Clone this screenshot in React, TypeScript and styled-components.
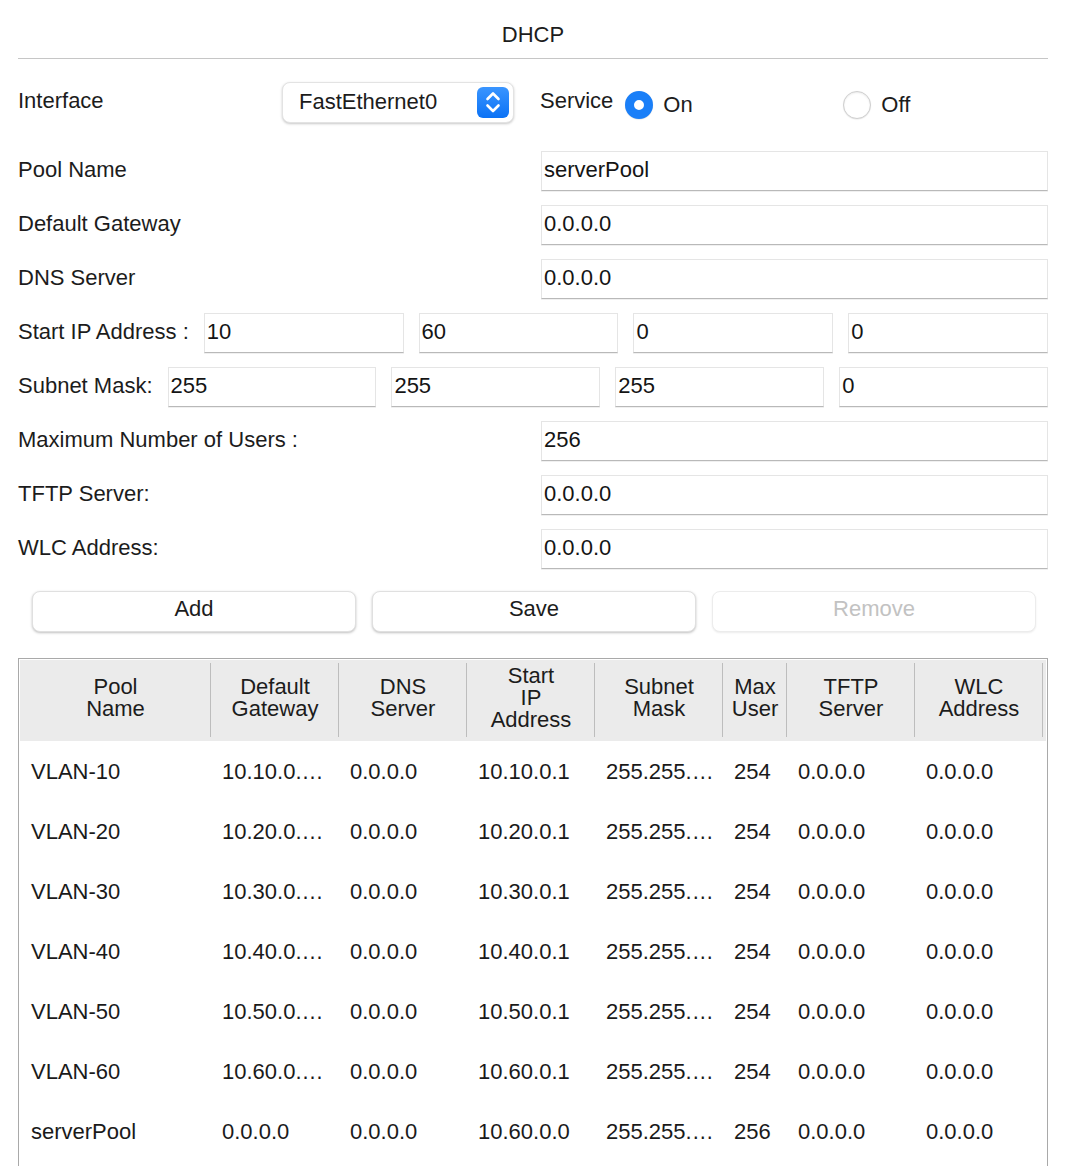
import React from 'react';
import styled, { createGlobalStyle } from 'styled-components';

const GlobalStyle = createGlobalStyle`
  html, body { margin: 0; padding: 0; background: #ffffff; }
  body {
    font-family: "Liberation Sans", Arial, Helvetica, sans-serif;
    color: #1c1c1c;
    overflow: hidden;
  }
  * { box-sizing: border-box; }
`;

const Page = styled.div`
  width: 1030px;
  margin-left: 18px;
`;

const Title = styled.h1`
  margin: 0;
  padding-top: 24px;
  font-size: 22px;
  line-height: 22px;
  font-weight: 400;
  text-align: center;
  color: #1c1c1c;
`;

const Divider = styled.hr`
  margin: 12px 0 0;
  border: 0;
  border-top: 1px solid #c6c6c6;
  height: 0;
`;

const InterfaceRow = styled.div`
  display: grid;
  grid-template-columns: 522px 1fr;
  align-items: center;
  height: 41px;
  margin-top: 23px;
`;

const Cell = styled.div`
  display: flex;
  align-items: center;
  height: 100%;
`;

const Label = styled.span`
  font-size: 22px;
  line-height: 24px;
  padding-bottom: 3px;
  white-space: nowrap;
  color: #1c1c1c;
`;

const GrowLabel = styled(Label)`
  flex: 1;
`;

const SelectBox = styled.div`
  width: 232px;
  height: 41px;
  margin-right: 26px;
  display: flex;
  align-items: center;
  justify-content: space-between;
  padding: 0 4px 2px 16px;
  background: #fff;
  border: 1px solid #e3e3e3;
  border-radius: 8px;
  box-shadow: 0 1px 2.5px rgba(0, 0, 0, 0.22);
  font-size: 22px;
  color: #1c1c1c;
`;

const Stepper = styled.span`
  width: 32px;
  height: 31px;
  margin-top: 2px;
  border-radius: 6px;
  background: linear-gradient(#3a95ff, #0b72f5);
  display: flex;
  align-items: center;
  justify-content: center;
`;

const ServiceLabel = styled(Label)`
  margin-right: 12px;
`;

const RadioOption = styled.label`
  display: flex;
  align-items: center;
  gap: 10px;
  width: 218px;
  font-size: 22px;
  padding-top: 5px;
`;

const RadioDot = styled.span<{ $on?: boolean }>`
  width: 28px;
  height: 28px;
  border-radius: 50%;
  flex: none;
  background: #fff;
  border: ${(p) => (p.$on ? '9px solid #1a7ff8' : '1px solid #cfcfcf')};
  box-shadow: ${(p) =>
    p.$on ? '0 0.5px 1px rgba(0,0,0,0.15)' : 'inset 0 1px 2px rgba(0,0,0,0.08), 0 0.5px 1px rgba(0,0,0,0.1)'};
`;

const FormRow = styled.div<{ $first?: boolean }>`
  display: grid;
  grid-template-columns: 523px 1fr;
  align-items: center;
  height: 40px;
  margin-top: ${(p) => (p.$first ? '28px' : '14px')};
`;

const SplitRow = styled.div`
  display: flex;
  align-items: center;
  gap: 15px;
  height: 40px;
  margin-top: 14px;
`;

const Field = styled.input`
  width: 100%;
  min-width: 0;
  height: 40px;
  padding: 0 2px 3px;
  font: inherit;
  font-size: 22px;
  color: #141414;
  background: #fff;
  border: 1px solid #e5e5e5;
  border-bottom: 1px solid #b9b9b9;
  box-shadow: 0 1px 0 rgba(0, 0, 0, 0.06);
  outline: none;
`;

const OctetField = styled(Field)`
  flex: 1;
`;

const ButtonRow = styled.div`
  display: flex;
  gap: 16px;
  padding: 0 12px 0 14px;
  margin-top: 22px;
`;

const ActionButton = styled.button<{ $disabled?: boolean }>`
  flex: 1;
  height: 41px;
  font: inherit;
  font-size: 22px;
  color: ${(p) => (p.$disabled ? '#c2c2c2' : '#1c1c1c')};
  background: #fff;
  border: 1px solid ${(p) => (p.$disabled ? '#ececec' : '#e0e0e0')};
  border-radius: 8px;
  box-shadow: ${(p) => (p.$disabled ? '0 1px 2px rgba(0,0,0,0.08)' : '0 1px 2.5px rgba(0,0,0,0.25)')};
  padding: 0;
  padding-bottom: 6px;
`;

const TableFrame = styled.div`
  margin-top: 26px;
  height: 530px;
  border: 1px solid #a9a9a9;
  padding: 1px;
`;

const PoolTable = styled.table`
  width: 100%;
  border-collapse: separate;
  border-spacing: 0;
  table-layout: fixed;
`;

const HeadCell = styled.th<{ $sep?: boolean }>`
  position: relative;
  height: 81px;
  padding: 0 2px 5px;
  background: #ebebeb;
  font-size: 22px;
  line-height: 22px;
  font-weight: 400;
  text-align: center;
  vertical-align: middle;
  color: #1c1c1c;

  &::after {
    content: '';
    display: ${(p) => (p.$sep ? 'block' : 'none')};
    position: absolute;
    right: 0;
    top: 3px;
    bottom: 4px;
    width: 1.5px;
    background: #bdbdbd;
  }
`;

const BodyCell = styled.td`
  height: 60px;
  padding: 2px 8px 0 11px;
  font-size: 22px;
  white-space: nowrap;
  overflow: hidden;
  text-overflow: ellipsis;
  vertical-align: middle;
  color: #1a1a1a;
`;

const Chevrons = () => (
  <svg width="32" height="31" viewBox="0 0 32 31" fill="none">
    <path d="M10.5 12 L16 6.5 L21.5 12" stroke="#fff" strokeWidth="2.6" strokeLinecap="round" strokeLinejoin="round" />
    <path d="M10.5 18.5 L16 24 L21.5 18.5" stroke="#fff" strokeWidth="2.6" strokeLinecap="round" strokeLinejoin="round" />
  </svg>
);

const fields: { label: string; value: string }[] = [
  { label: 'Pool Name', value: 'serverPool' },
  { label: 'Default Gateway', value: '0.0.0.0' },
  { label: 'DNS Server', value: '0.0.0.0' },
];

const tailFields: { label: string; value: string }[] = [
  { label: 'Maximum Number of Users :', value: '256' },
  { label: 'TFTP Server:', value: '0.0.0.0' },
  { label: 'WLC Address:', value: '0.0.0.0' },
];

const columns: { width: number; title: string[] }[] = [
  { width: 191, title: ['Pool', 'Name'] },
  { width: 128, title: ['Default', 'Gateway'] },
  { width: 128, title: ['DNS', 'Server'] },
  { width: 128, title: ['Start', 'IP', 'Address'] },
  { width: 128, title: ['Subnet', 'Mask'] },
  { width: 64, title: ['Max', 'User'] },
  { width: 128, title: ['TFTP', 'Server'] },
  { width: 128, title: ['WLC', 'Address'] },
];

type Pool = [string, string, string, string, string, string, string, string];

const pools: Pool[] = [
  ...[10, 20, 30, 40, 50, 60].map(
    (n): Pool => [
      `VLAN-${n}`,
      `10.${n}.0.254`,
      '0.0.0.0',
      `10.${n}.0.1`,
      '255.255.255.0',
      '254',
      '0.0.0.0',
      '0.0.0.0',
    ]
  ),
  ['serverPool', '0.0.0.0', '0.0.0.0', '10.60.0.0', '255.255.255.0', '256', '0.0.0.0', '0.0.0.0'],
];

export default function App() {
  return (
    <>
      <GlobalStyle />
      <Page>
        <Title>DHCP</Title>
        <Divider />

        <InterfaceRow>
          <Cell>
            <GrowLabel>Interface</GrowLabel>
            <SelectBox>
              <span>FastEthernet0</span>
              <Stepper>
                <Chevrons />
              </Stepper>
            </SelectBox>
          </Cell>
          <Cell>
            <ServiceLabel>Service</ServiceLabel>
            <RadioOption>
              <RadioDot $on />
              On
            </RadioOption>
            <RadioOption>
              <RadioDot />
              Off
            </RadioOption>
          </Cell>
        </InterfaceRow>

        {fields.map((f, i) => (
          <FormRow key={f.label} $first={i === 0}>
            <Label>{f.label}</Label>
            <Field defaultValue={f.value} readOnly />
          </FormRow>
        ))}

        <SplitRow>
          <Label>Start IP Address :</Label>
          {['10', '60', '0', '0'].map((v, i) => (
            <OctetField key={i} defaultValue={v} readOnly />
          ))}
        </SplitRow>

        <SplitRow>
          <Label>Subnet Mask:</Label>
          {['255', '255', '255', '0'].map((v, i) => (
            <OctetField key={i} defaultValue={v} readOnly />
          ))}
        </SplitRow>

        {tailFields.map((f) => (
          <FormRow key={f.label}>
            <Label>{f.label}</Label>
            <Field defaultValue={f.value} readOnly />
          </FormRow>
        ))}

        <ButtonRow>
          <ActionButton>Add</ActionButton>
          <ActionButton>Save</ActionButton>
          <ActionButton $disabled>Remove</ActionButton>
        </ButtonRow>

        <TableFrame>
          <PoolTable>
            <colgroup>
              {columns.map((c, i) => (
                <col key={i} style={{ width: c.width }} />
              ))}
              <col />
            </colgroup>
            <thead>
              <tr>
                {columns.map((c, i) => (
                  <HeadCell key={i} $sep>
                    {c.title.map((w, j) => (
                      <React.Fragment key={j}>
                        {j > 0 && <br />}
                        {w}
                      </React.Fragment>
                    ))}
                  </HeadCell>
                ))}
                <HeadCell />
              </tr>
            </thead>
            <tbody>
              {pools.map((row) => (
                <tr key={row[0]}>
                  {row.map((v, i) => (
                    <BodyCell key={i}>{v}</BodyCell>
                  ))}
                  <BodyCell />
                </tr>
              ))}
            </tbody>
          </PoolTable>
        </TableFrame>
      </Page>
    </>
  );
}
